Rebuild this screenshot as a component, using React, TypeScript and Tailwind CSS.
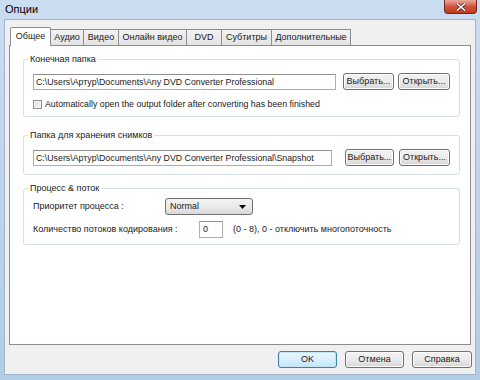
const tabs = [
  { label: 'Общее', w: 'w-[41px]', active: true },
  { label: 'Аудио', w: 'w-[33px]' },
  { label: 'Видео', w: 'w-[35px]' },
  { label: 'Онлайн видео', w: 'w-[68px]' },
  { label: 'DVD', w: 'w-[35px]' },
  { label: 'Субтитры', w: 'w-[50px]' },
  { label: 'Дополнительные', w: 'w-[79px]' },
]

function Btn({ children, className = '' }: { children: React.ReactNode; className?: string }) {
  return (
    <button
      type="button"
      className={`h-[17px] rounded-[3px] border border-[#707070] bg-gradient-to-b from-[#f2f2f2] via-[#ebebeb] to-[#d6d6d6] text-[9px] leading-none text-[#1a1a1a] shadow-[inset_0_0_0_1px_#fcfcfc] ${className}`}
    >
      {children}
    </button>
  )
}

function PathInput({ value, w }: { value: string; w: string }) {
  return (
    <div className={`h-[16px] ${w} border border-[#abadb3] border-t-[#8e8f8f] bg-white pl-[2px] text-[8.8px] leading-[14px] whitespace-nowrap overflow-hidden`}>
      {value}
    </div>
  )
}

function Group({ title, className = '', children }: { title: string; className?: string; children: React.ReactNode }) {
  return (
    <fieldset className={`rounded-[3px] border border-[#d5dfe5] ${className}`}>
      <legend className="-ml-[5px] px-[2px] text-[9px] leading-[12px] text-[#1a1a1a]">{title}</legend>
      {children}
    </fieldset>
  )
}

export default function App() {
  return (
    <div
      className="w-[480px] h-[380px] flex flex-col bg-gradient-to-b from-[#cbddf0] via-[#bed4eb] to-[#b3cce6] text-[#1a1a1a] overflow-hidden"
      style={{ fontFamily: '"Liberation Sans", Arial, sans-serif' }}
    >
      {/* title bar */}
      <div className="h-[19px] flex items-start justify-between pl-[5px] pr-[3px]">
        <span className="mt-[3px] text-[11px] leading-[13px] text-black">Опции</span>
        <div className="w-[33px] h-[14px] rounded-b-[4px] border border-t-0 border-[#6e2a20] bg-gradient-to-b from-[#e9a99c] via-[#d2533e] to-[#c0391f] flex items-center justify-center">
          <svg width="10" height="8" viewBox="0 0 10 8">
            <path d="M1 0.5 L9 7.5 M9 0.5 L1 7.5" stroke="#5a2a22" strokeWidth="3" />
            <path d="M1 0.5 L9 7.5 M9 0.5 L1 7.5" stroke="#ffffff" strokeWidth="1.6" />
          </svg>
        </div>
      </div>

      {/* client area */}
      <div className="flex-1 mx-[4px] mb-[5px] bg-[#f0f0f0] border border-[#9fb4ca] flex flex-col px-[4px] pt-[6px] pb-[6px]">
        {/* tabs */}
        <div className="flex items-end h-[19px] pl-[1px] relative z-10">
          {tabs.map((t) =>
            t.active ? (
              <div
                key={t.label}
                className={`${t.w} h-[19px] -mb-px border border-b-0 border-[#898c95] bg-white text-[9px] leading-[16px] text-center rounded-t-[2px]`}
              >
                {t.label}
              </div>
            ) : (
              <div
                key={t.label}
                className={`${t.w} h-[16px] border border-b-0 border-l-0 border-[#898c95] bg-gradient-to-b from-[#f3f3f3] to-[#e3e3e3] text-[9px] leading-[15px] text-center whitespace-nowrap`}
              >
                {t.label}
              </div>
            )
          )}
        </div>

        {/* panel */}
        <div className="flex-1 bg-white border border-[#898c95] pl-[13px] pr-[10px] pt-[7px] flex flex-col">
          <Group title="Конечная папка" className="px-[9px] pt-[8px] pb-[6px]">
            <div className="flex items-center">
              <PathInput w="w-[303px]" value="C:\Users\Артур\Documents\Any DVD Converter Professional" />
              <Btn className="ml-[7px] w-[51px]">Выбрать...</Btn>
              <Btn className="ml-[4px] w-[52px]">Открыть...</Btn>
            </div>
            <div className="flex items-center h-[12px] mt-[8px]">
              <span className="w-[9px] h-[9px] border border-[#8f8f8f] bg-gradient-to-br from-[#dcdcdc] to-[#f8f8f8] shadow-[inset_0_0_0_1px_#f4f4f4]" />
              <span className="ml-[3px] text-[8.8px] leading-none">
                Automatically open the output folder after converting has been finished
              </span>
            </div>
          </Group>

          <Group title="Папка для хранения снимков" className="mt-[12px] px-[9px] pt-[8px] pb-[8px]">
            <div className="flex items-center">
              <PathInput w="w-[299px]" value="C:\Users\Артур\Documents\Any DVD Converter Professional\Snapshot" />
              <Btn className="ml-[13px] w-[49px]">Выбрать...</Btn>
              <Btn className="ml-[5px] w-[51px]">Открыть...</Btn>
            </div>
          </Group>

          <Group title="Процесс & поток" className="mt-[7px] px-[9px] pt-[4px] pb-[6px]">
            <div className="flex items-center h-[17px]">
              <span className="w-[132px] text-[9px] leading-none">Приоритет процесса :</span>
              <div className="w-[88px] h-[17px] rounded-[3px] border border-[#707070] bg-gradient-to-b from-[#f2f2f2] via-[#ebebeb] to-[#d8d8d8] flex items-center justify-between pl-[4px] pr-[6px]">
                <span className="text-[9px] leading-none">Normal</span>
                <svg width="7" height="4" viewBox="0 0 7 4">
                  <path d="M0 0 H7 L3.5 4 Z" fill="#000" />
                </svg>
              </div>
            </div>
            <div className="flex items-center h-[17px] mt-[6px]">
              <span className="w-[166px] text-[9px] leading-none">Количество потоков кодирования :</span>
              <div className="w-[24px] h-[17px] border border-[#abadb3] border-t-[#8e8f8f] bg-white pl-[3px] text-[9px] leading-[15px]">
                0
              </div>
              <span className="ml-[10px] text-[9px] leading-none">(0 - 8), 0 - отключить многопоточность</span>
            </div>
          </Group>
        </div>

        {/* buttons */}
        <div className="flex justify-end gap-[8px] mt-[6px] -mr-[1px]">
          <button
            type="button"
            className="w-[59px] h-[17px] rounded-[3px] border border-[#3c7fb1] bg-gradient-to-b from-[#eaf6fd] via-[#d9f0fc] to-[#bee6fd] text-[9px] leading-none shadow-[inset_0_0_0_1px_#c4e5f6]"
          >
            OK
          </button>
          <Btn className="w-[59px]">Отмена</Btn>
          <Btn className="w-[60px]">Справка</Btn>
        </div>
      </div>
    </div>
  )
}
